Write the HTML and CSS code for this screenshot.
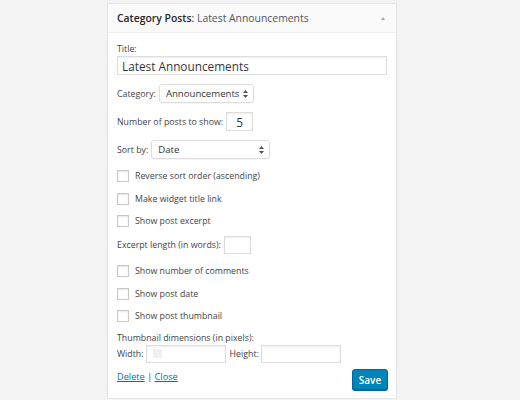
FILE: index.html
```html
<!DOCTYPE html>
<html>
<head>
<meta charset="utf-8">
<link rel="stylesheet" href="styles.css">
</head>
<body>
<div class="widget">
  <div class="widget-top">
    <div class="widget-title"><strong>Category Posts</strong>: <span class="in-title">Latest Announcements</span></div>
    <span class="toggle"></span>
  </div>
  <div class="widget-inside">
    <div class="title-row">
      <label class="blk">Title:</label>
      <input class="text wide" type="text" value="Latest Announcements">
    </div>
    <div class="row inline">
      <label>Category:</label>
      <div class="sel sel-cat"><select><option>Announcements</option></select><svg class="arr" width="5" height="8" viewBox="0 0 5 8"><path d="M0 3 L2.5 0 L5 3 Z M0 5 L2.5 8 L5 5 Z" fill="#555"/></svg></div>
    </div>
    <div class="row inline">
      <label>Number of posts to show:</label>
      <input class="text num" type="text" value="5">
    </div>
    <div class="row inline">
      <label>Sort by:</label>
      <div class="sel sel-sort"><select><option>Date</option></select><svg class="arr" width="5" height="8" viewBox="0 0 5 8"><path d="M0 3 L2.5 0 L5 3 Z M0 5 L2.5 8 L5 5 Z" fill="#555"/></svg></div>
    </div>
    <div class="check first"><span class="box"></span><span>Reverse sort order (ascending)</span></div>
    <div class="check"><span class="box"></span><span>Make widget title link</span></div>
    <div class="check"><span class="box"></span><span>Show post excerpt</span></div>
    <div class="row inline excerpt">
      <label>Excerpt length (in words):</label>
      <input class="text num" type="text" value="">
    </div>
    <div class="check"><span class="box"></span><span>Show number of comments</span></div>
    <div class="check"><span class="box"></span><span>Show post date</span></div>
    <div class="check"><span class="box"></span><span>Show post thumbnail</span></div>
    <div class="dims">
      <label class="blk">Thumbnail dimensions (in pixels):</label>
      <div class="dims-line">
        <label>Width:</label>
        <div class="wbox"><input class="text dim" type="text" value=""><span class="fill"></span></div>
        <label class="hlab">Height:</label>
        <input class="text dim" type="text" value="">
      </div>
    </div>
    <div class="actions">
      <div class="links"><a href="#">Delete</a> | <a href="#">Close</a></div>
      <button class="save">Save</button>
    </div>
  </div>
</div>
</body>
</html>
```

FILE: styles.css
```css
html, body {
  margin: 0;
  padding: 0;
  background: #f3f3f3;
}
body {
  font-family: "Open Sans", "Liberation Sans", sans-serif;
  font-size: 8.8px;
  color: #444;
  padding-top: 3px;
}
.widget {
  margin-left: 107px;
  width: 290px;
  height: 396px;
  background: #fff;
  border: 1px solid #e5e5e5;
  box-sizing: border-box;
}
.widget-top {
  height: 28px;
  background: #fafafa;
  border-bottom: 1px solid #eee;
  display: flex;
  align-items: center;
  justify-content: space-between;
  padding: 0 11px 0 9px;
}
.widget-title {
  font-size: 10.4px;
  color: #23282d;
}
.widget-title strong {
  font-weight: 600;
}
.in-title {
  color: #50575e;
}
.toggle {
  width: 0;
  height: 0;
  border-left: 2.5px solid transparent;
  border-right: 2.5px solid transparent;
  border-bottom: 3px solid #aaa;
}
.widget-inside {
  padding: 9px 9px 0 9px;
}
.blk {
  display: block;
  line-height: 14px;
}
input.text {
  font-family: inherit;
  font-size: 11.8px;
  color: #32373c;
  border: 1px solid #ddd;
  box-shadow: inset 0 1px 2px rgba(0,0,0,.07);
  height: 19px;
  box-sizing: border-box;
  padding: 0 4px;
  margin: 0;
  outline: none;
  background: #fff;
}
input.wide {
  width: 270px;
  display: block;
}
input.num {
  width: 27px;
  text-align: center;
}
.row {
  margin-top: 9px;
}
.inline {
  display: flex;
  align-items: center;
  gap: 3px;
  height: 19px;
}
.sel {
  position: relative;
  height: 19px;
}
.sel select {
  appearance: none;
  -webkit-appearance: none;
  font-family: inherit;
  font-size: 9.6px;
  color: #32373c;
  height: 19px;
  border: 1px solid #ddd;
  border-radius: 3px;
  background: #fff;
  box-shadow: 0 1px 1px rgba(0,0,0,.04);
  padding: 0 12px 0 6px;
  margin: 0;
  box-sizing: border-box;
  outline: none;
}
.sel-cat select { width: 95px; }
.sel-sort select { width: 119px; }
.arr {
  position: absolute;
  right: 6px;
  top: 6px;
}
.check {
  display: flex;
  align-items: center;
  gap: 6px;
  height: 14px;
  margin-top: 8.5px;
}
.check.first {
  margin-top: 10px;
}
.excerpt {
  margin-top: 8px;
  height: 18px;
}
.excerpt input.num {
  height: 18px;
}
.excerpt + .check {
  margin-top: 10px;
}
.box {
  width: 10px;
  height: 10px;
  border: 1px solid #c8c8c8;
  box-shadow: inset 0 1px 2px rgba(0,0,0,.1);
  background: #fff;
  flex: none;
}
.dims {
  margin-top: 8px;
}
.dims-line {
  display: flex;
  align-items: center;
  gap: 2px;
}
.wbox {
  position: relative;
  height: 18px;
}
.fill {
  position: absolute;
  left: 7px;
  top: 4px;
  width: 9px;
  height: 9px;
  background: #f0f0f0;
}
input.dim {
  width: 80px;
  height: 18px;
  display: block;
}
.hlab {
  margin-left: 2px;
}
.actions {
  display: flex;
  justify-content: space-between;
  align-items: flex-start;
  margin-top: 6px;
}
.links {
  padding-top: 1px;
  line-height: 14px;
  font-size: 9.2px;
}
.links a {
  color: #0073aa;
}
.save {
  font-family: inherit;
  font-size: 10px;
  font-weight: 600;
  color: #fff;
  background: #0085ba;
  border: 1px solid #006799;
  border-radius: 3px;
  box-shadow: 0 1px 0 #006799;
  height: 21px;
  width: 36px;
  padding: 0;
  margin: 0 -1px 0 0;
}
```
